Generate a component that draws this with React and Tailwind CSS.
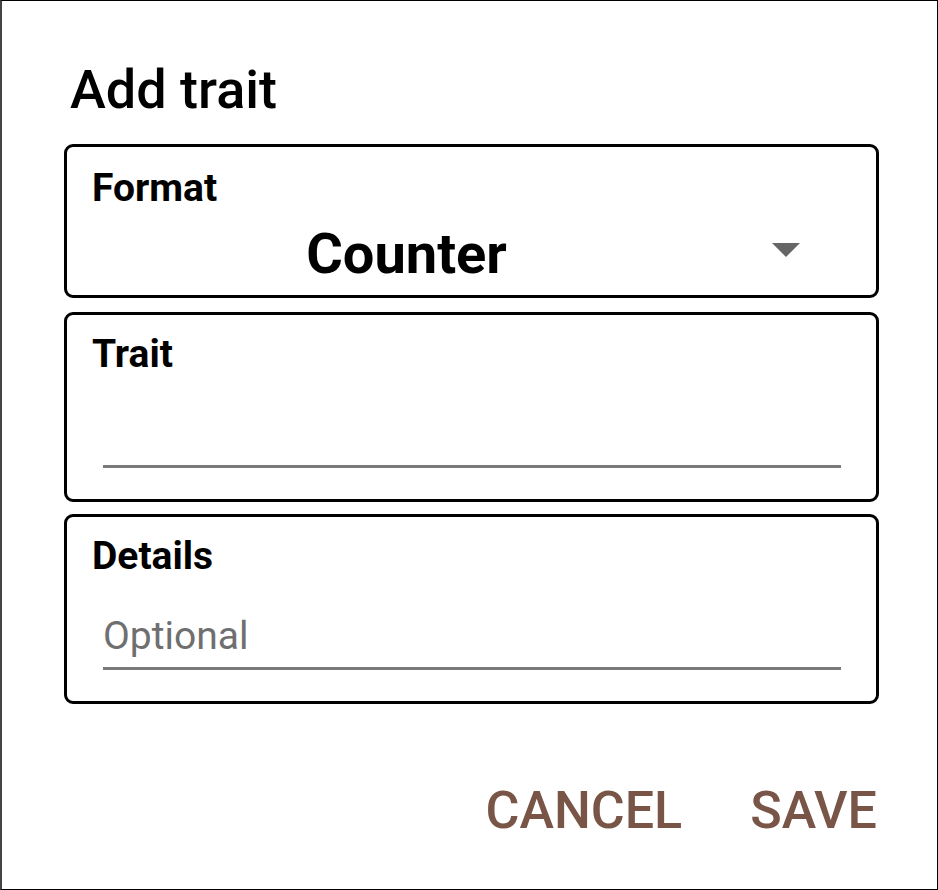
import React from 'react';

const font = { fontFamily: 'Roboto, "Noto Sans", sans-serif' };

function Field({ label, placeholder, className }) {
  return (
    <div className={`h-[190px] border-[3px] border-black rounded-[9px] pl-[25px] pt-[20px] ${className}`}>
      <div className="text-[39px] font-bold leading-none text-black">{label}</div>
      <div className="ml-[11px] w-[738px] h-[94px] flex items-end pb-[11px] border-b-[3px] border-[#7a7a7a]">
        <span className="text-[39px] leading-none text-[#6f6f6f]">{placeholder}</span>
      </div>
    </div>
  );
}

export default function App() {
  return (
    <div
      style={font}
      className="w-[938px] h-[890px] bg-white border-t border-r border-b border-black border-l-[2px] border-l-[#444] pl-[62px]"
    >
      <div className="w-[815px]">
        <h1 className="mt-[62px] ml-[6px] text-[54px] font-medium leading-none text-black">Add trait</h1>

        {/* Format spinner */}
        <div className="mt-[27px] h-[154px] border-[3px] border-black rounded-[9px] pl-[25px] pt-[22px]">
          <div className="text-[39px] font-bold leading-none text-black">Format</div>
          <div className="mt-[18px] flex items-start">
            <div className="w-[629px] text-center text-[56px] font-bold leading-none text-black">Counter</div>
            <svg className="ml-[51px] mt-[17px]" width="28" height="14" viewBox="0 0 28 14">
              <path d="M0 0h28L14 14z" fill="#666" />
            </svg>
          </div>
        </div>

        <Field label="Trait" placeholder="" className="mt-[14px]" />
        <Field label="Details" placeholder="Optional" className="mt-[12px]" />

        <div className="mt-[81px] flex justify-end gap-[68px] pr-[2px]">
          <button className="text-[52px] font-medium leading-none text-[#795548]">CANCEL</button>
          <button className="text-[52px] font-medium leading-none text-[#795548]">SAVE</button>
        </div>
      </div>
    </div>
  );
}
